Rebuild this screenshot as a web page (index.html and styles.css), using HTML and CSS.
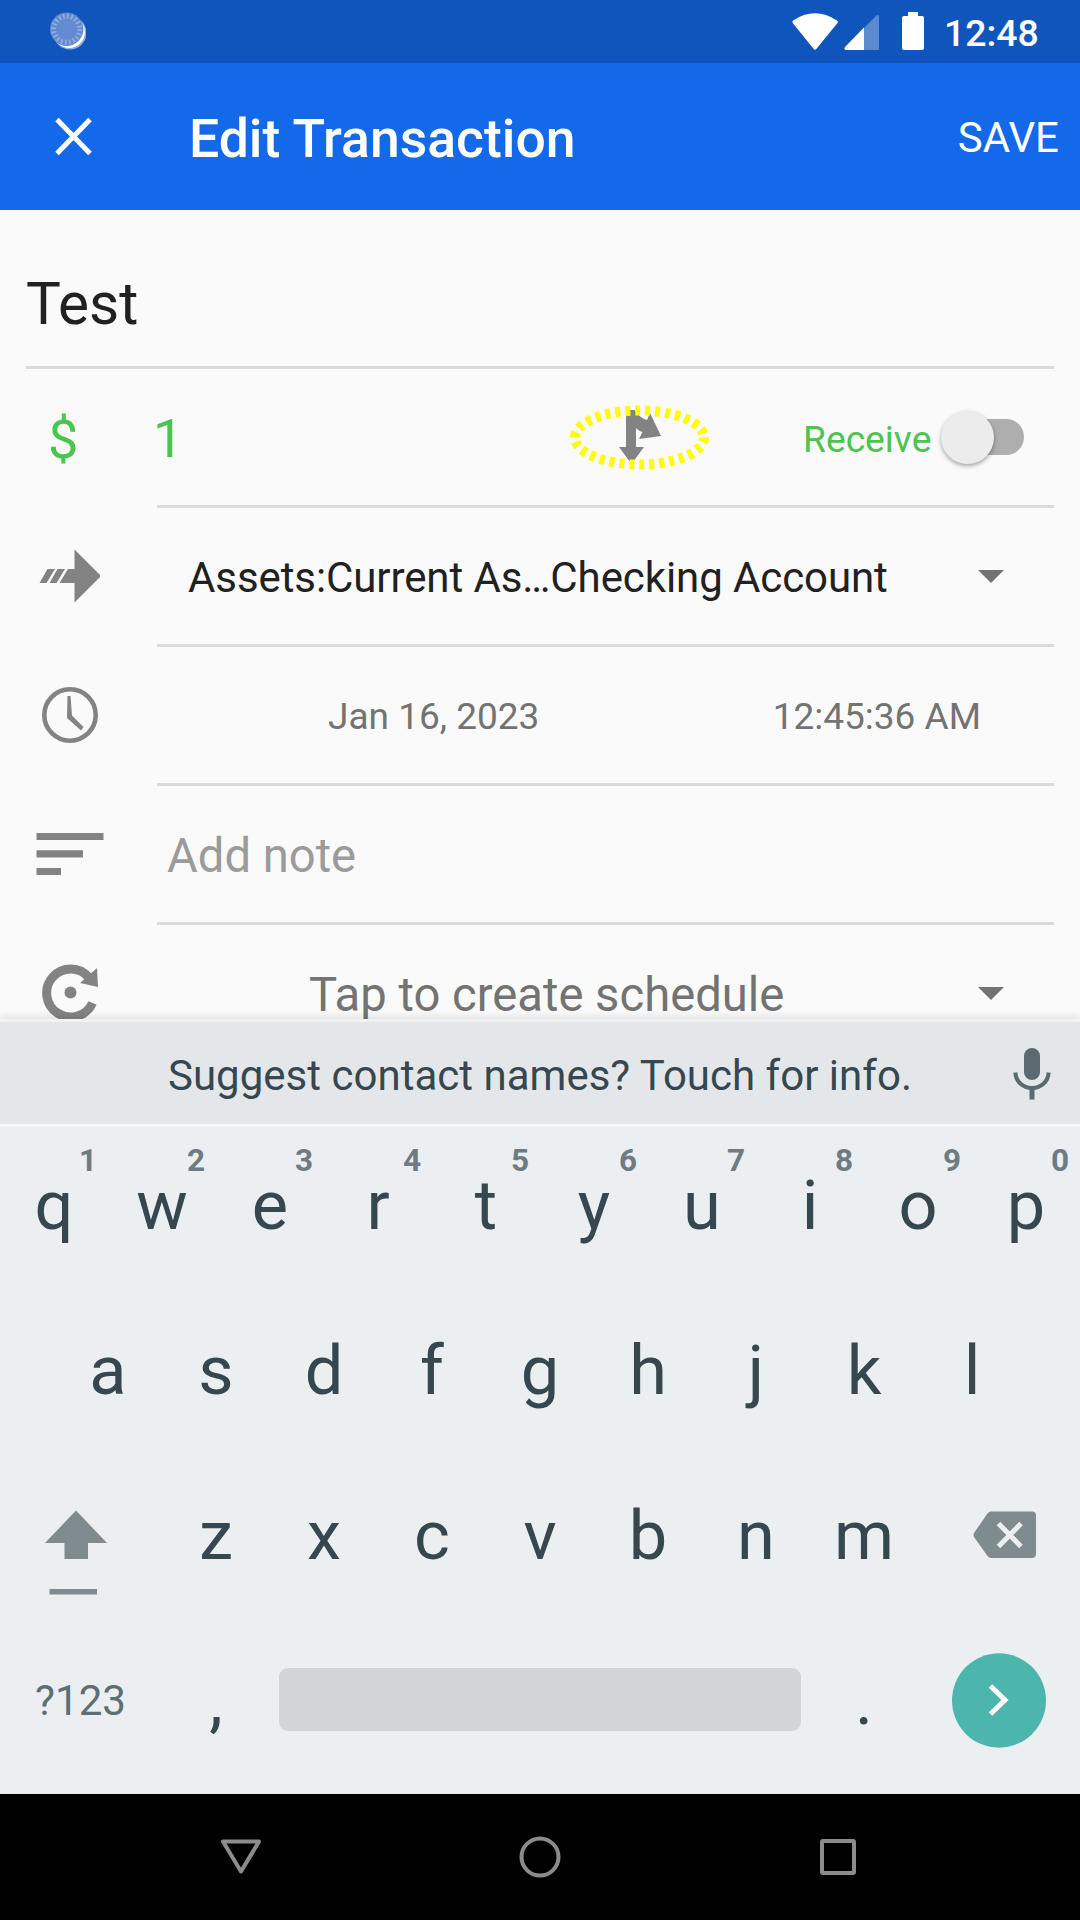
FILE: index.html
```html
<!DOCTYPE html>
<html lang="en">
<head>
<meta charset="utf-8">
<title>Edit Transaction</title>
<link rel="stylesheet" href="styles.css">
</head>
<body>
<div class="screen">
  <header class="status">
    <svg class="sync" width="36" height="40" viewBox="0 0 36 40">
      <circle cx="20" cy="21" r="16.500" fill="#8fadde"/>
      <circle cx="19" cy="20" r="16" fill="#fff"/>
      <circle cx="16.700" cy="17.200" r="16.700" fill="#638bd0"/>
      <circle cx="16.700" cy="17.200" r="13" fill="none" stroke="#93afe0" stroke-width="5" stroke-dasharray="1.6 2.484"/>
    </svg>
    <div class="status-right">
      <svg width="134" height="40" viewBox="0 0 134 40">
        <path d="M1 9.500Q23 -5 45 9.500Q46.500 10.500 45.500 12L24.700 37.500Q23 40 21.300 37.500L.7 12Q0 10.500 1 9.500Z" fill="#fff" transform="translate(0,-1)"/>
        <path d="M72 16V38H86Q87 38 87 37V4.500Q87 2.500 85 3Z" fill="#5a8ad0"/>
        <path d="M54 38Q51.500 37.500 53 35L72 15.500V38Z" fill="#fff"/>
        <path d="M116 0h10v4h4q2 0 2 2v30q0 2-2 2h-18q-2 0-2-2V6q0-2 2-2h4z" fill="#fff"/>
      </svg>
      <span class="clock">12:48</span>
    </div>
  </header>

  <div class="appbar">
    <svg class="close" width="38" height="38" viewBox="0 0 38 38"><path d="M3 1.500L36 35.500M36 1.500L3 35.500" stroke="#fff" stroke-width="5" fill="none"/></svg>
    <h1 class="title">Edit Transaction</h1>
    <span class="save">SAVE</span>
  </div>

  <main class="form">
    <div class="name">Test</div>
    <div class="row">
      <div class="lead currency">$</div>
      <div class="field amount-field">
        <span class="amount">1</span>
        <svg class="split" width="144" height="68" viewBox="0 0 144 68">
          <path d="M58 7H66.500C69 11 73 15 79 17L82 10L93 33L71 36L74.500 29C71.500 28 69 26.500 68 25V44H76L63.500 61L51 44H58Z" fill="#838383"/>
          <ellipse cx="71.500" cy="34.500" rx="64.500" ry="27" fill="none" stroke="#ff0" stroke-width="10" stroke-dasharray="5 5"/>
        </svg>
        <span class="receive">Receive</span>
        <span class="switch"><span class="thumb"></span></span>
      </div>
    </div>
    <div class="row">
      <div class="lead"><svg width="64" height="56" viewBox="0 0 64 56"><path d="M38.500 1.500L65 28L38.500 54.500V35H23.500L32 21H38.500ZM11.500 21H19L10.500 35H3.500ZM21.500 21H29L20.500 35H13.500Z" fill="#838383"/></svg></div>
      <div class="field account-field"><span class="account">Assets:Current As…Checking Account</span><span class="caret"></span></div>
    </div>
    <div class="row">
      <div class="lead"><svg width="64" height="58" viewBox="0 0 64 58"><circle cx="34" cy="29" r="25.700" fill="none" stroke="#838383" stroke-width="4.600"/><path d="M31.500 10H34.500L36 29.500L47.500 41L45 44.500L31 32Z" fill="#838383"/></svg></div>
      <div class="field date-field"><span>Jan 16, 2023</span><span class="time">12:45:36 AM</span></div>
    </div>
    <div class="row">
      <div class="lead"><svg width="68" height="44" viewBox="0 0 68 44"><path d="M.5 1H67.500V8H.5ZM.5 18.300H47V25.500H.5ZM.5 36H25V43H.5Z" fill="#838383"/></svg></div>
      <div class="field note-field">Add note</div>
    </div>
    <div class="row last">
      <div class="lead"><svg width="64" height="60" viewBox="0 0 64 60"><path d="M53 14.500A24 24 0 1 0 56.500 40" fill="none" stroke="#838383" stroke-width="9"/><path d="M61 5L62 24L44 20Z" fill="#838383"/><circle cx="34.500" cy="29.500" r="6" fill="#838383"/></svg></div>
      <div class="field schedule-field"><span class="schedule">Tap to create schedule</span><span class="caret"></span></div>
    </div>
  </main>

  <section class="keyboard">
    <div class="suggest">
      <span class="hint-text">Suggest contact names? Touch for info.</span>
      <svg class="mic" width="38" height="52" viewBox="0 0 38 52"><rect x="11" y="0" width="16" height="32" rx="8" fill="#5b6a70"/><path d="M2.300 24.500C3 34 10 40 19 40S35 34 35.700 24.500" fill="none" stroke="#5b6a70" stroke-width="4"/><path d="M16.500 40h5v11.500h-5z" fill="#5b6a70"/></svg>
    </div>
    <div class="keys">
      <span class="key">q<sup>1</sup></span><span class="key">w<sup>2</sup></span><span class="key">e<sup>3</sup></span><span class="key">r<sup>4</sup></span><span class="key">t<sup>5</sup></span><span class="key">y<sup>6</sup></span><span class="key">u<sup>7</sup></span><span class="key">i<sup>8</sup></span><span class="key">o<sup>9</sup></span><span class="key">p<sup>0</sup></span>
    </div>
    <div class="keys">
      <span class="key">a</span><span class="key">s</span><span class="key">d</span><span class="key">f</span><span class="key">g</span><span class="key">h</span><span class="key">j</span><span class="key">k</span><span class="key">l</span>
    </div>
    <div class="keys">
      <span class="side shift"><svg width="64" height="86" viewBox="0 0 64 86"><path d="M32 .5L63 33H44V49H20.500V33H1ZM5.500 79H53V84.500H5.500Z" fill="#808b8f"/></svg></span>
      <span class="key">z</span><span class="key">x</span><span class="key">c</span><span class="key">v</span><span class="key">b</span><span class="key">n</span><span class="key">m</span>
      <span class="side back"><svg width="64" height="48" viewBox="0 0 64 48"><path d="M18 .5H59Q63 .5 63 4.500V43Q63 47 59 47H18Q16 47 14.500 45L1 26Q0 24 1 22L14.500 2.500Q16 .5 18 .5Z" fill="#808b8f"/><path d="M25.500 12.500L48 35.500M48 12.500L25.500 35.500" stroke="#ebeff2" stroke-width="5"/></svg></span>
    </div>
    <div class="keys">
      <span class="side mode">?123</span>
      <span class="key">,</span>
      <span class="space"></span>
      <span class="key">.</span>
      <span class="side enter"><svg width="94" height="95" viewBox="0 0 94 95"><ellipse cx="47" cy="47.500" rx="47" ry="47.200" fill="#4db6ac"/><path d="M38.500 33L53 47L38.500 61" fill="none" stroke="#fff" stroke-width="5"/></svg></span>
    </div>
  </section>

  <nav class="nav">
    <svg width="42" height="42" viewBox="0 0 42 42"><path d="M3 5.500H39L21 35.500Z" fill="none" stroke="#8c8c8c" stroke-width="4" stroke-linejoin="round"/></svg>
    <svg width="42" height="42" viewBox="0 0 42 42"><circle cx="21" cy="21" r="18.500" fill="none" stroke="#8c8c8c" stroke-width="4"/></svg>
    <svg width="42" height="42" viewBox="0 0 42 42"><rect x="4" y="5" width="32" height="32" rx="1" fill="none" stroke="#8c8c8c" stroke-width="4"/></svg>
  </nav>
</div>
</body>
</html>
```
FILE: styles.css
```css
* { box-sizing: border-box; }
body { margin: 0; font-family: Roboto, sans-serif; }
svg { display: block; flex: none; }
.screen { width: 1080px; height: 1920px; display: flex; flex-direction: column; background: #fafafa; overflow: hidden; }

.status { height: 63px; flex: none; background: #1055bc; display: flex; align-items: flex-start; justify-content: space-between; padding: 12px 44px 0 50px; }
.status-right { display: flex; gap: 18px; }
.clock { color: #fff; font-size: 37.4px; font-weight: 500; line-height: 42px; width: 92px; white-space: nowrap; }

.appbar { height: 147px; flex: none; background: #1469eb; color: #fff; display: flex; align-items: center; padding: 1px 21px 0 54px; }
.title { margin: 0 auto 0 97px; font-size: 53.5px; font-weight: 500; line-height: 60px; padding-top: 3px; white-space: nowrap; }
.save { font-size: 42px; padding-top: 1px; }

.form { height: 809px; flex: none; overflow: hidden; padding: 0 26px; }
.name { height: 159px; border-bottom: 3px solid #dadada; padding-top: 60px; font-size: 58.5px; line-height: 68px; color: #212121; }
.row { display: flex; height: 139px; }
.lead { width: 131px; flex: none; display: flex; align-items: center; padding: 0 0 3px 10px; }
.currency { color: #4bc550; font-size: 54px; padding: 1px 0 0 22px; }
.field { flex: 1; display: flex; align-items: center; border-bottom: 3px solid #dadada; white-space: nowrap; }
.last .field { border-bottom-color: transparent; }
.amount-field { color: #4bc550; }
.amount { font-size: 54px; width: 415px; padding-top: 3px; margin-left: -4px; }
.split { margin-right: 91px; }
.receive { font-size: 37.2px; width: 142px; padding-top: 3px; }
.switch { width: 79px; height: 36px; border-radius: 18px; background: #aeaeae; display: flex; align-items: center; }
.thumb { width: 53px; height: 53px; border-radius: 50%; background: #ececec; box-shadow: 0 2px 4px rgba(0,0,0,.35); flex: none; margin-left: -4px; }
.account-field { padding: 2px 50px 0 31px; justify-content: space-between; }
.account { font-size: 42px; letter-spacing: -.09px; color: #212121; }
.caret { border: 13px solid transparent; border-top-color: #737373; border-bottom: 0; margin-bottom: 2px; }
.date-field { font-size: 37px; color: #737373; padding: 3px 0 0 171px; }
.time { margin-left: auto; padding-right: 73px; }
.note-field { font-size: 47.2px; color: #9b9b9b; padding: 4px 0 0 10px; }
.schedule-field { font-size: 47.2px; color: #737373; padding: 2px 50px 0 152px; justify-content: space-between; }
.schedule { padding-top: 2px; }

.keyboard { height: 775px; flex: none; background: #ebeff2; border-top: 3px solid #f0f2f3; box-shadow: 0 -2px 8px rgba(0,0,0,.12); }
.suggest { height: 105px; background: #e3e7ea; border-bottom: 3px solid #f5f8fa; display: flex; align-items: center; padding: 0 29px 0 168px; justify-content: space-between; }
.hint-text { color: #37474f; font-size: 42px; letter-spacing: .015px; padding-top: 5px; }
.mic { margin-top: 1px; }
.keys { height: 165px; display: flex; justify-content: center; }
.key { width: 108px; text-align: center; font-size: 68.5px; line-height: 80px; padding-top: 39px; color: #37474f; position: relative; }
.key sup { position: absolute; left: 76px; width: 24px; top: 16px; font-size: 31.5px; line-height: 36px; font-weight: 700; color: #6e7b80; text-align: center; }
.side { width: 162px; flex: none; display: flex; align-items: flex-start; }
.shift { padding: 53px 0 0 43.5px; }
.back { padding: 54px 0 0 55px; }
.mode { font-size: 42.2px; line-height: 50px; padding: 54px 0 0 35px; color: #5f6e74; }
.space { width: 522px; margin: 46px 9px 0; height: 63px; border-radius: 9px; background: #d1d5d8; }
.enter { padding: 31px 0 0 34px; }

.nav { flex: 1; background: #000; display: flex; align-items: center; justify-content: center; gap: 257px; }
```
